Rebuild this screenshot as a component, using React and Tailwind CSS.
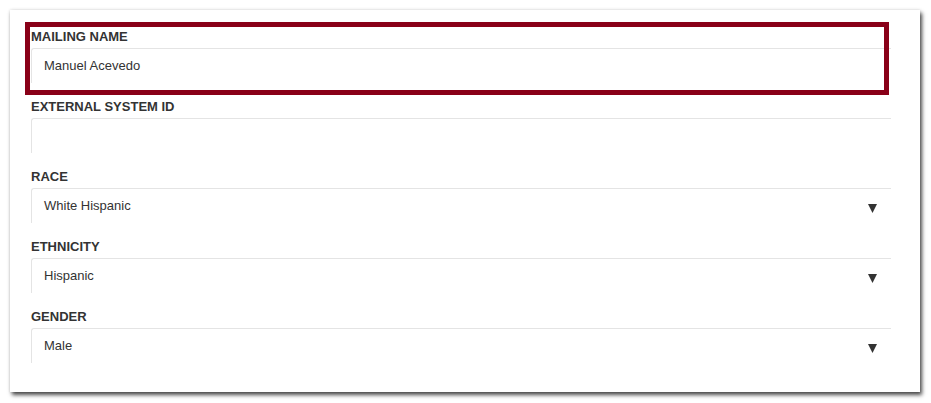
import React from "react";

const fields = [
    { label: "Mailing Name", value: "Manuel Acevedo", highlight: true },
    { label: "External System ID", value: "" },
    { label: "Race", value: "White Hispanic", select: true },
    { label: "Ethnicity", value: "Hispanic", select: true },
    { label: "Gender", value: "Male", select: true },
];

const Caret = () => (
    <svg width="9" height="9" viewBox="0 0 9 9" className="mt-1 shrink-0">
        <polygon points="0,0 9,0 4.5,9" fill="#333333" />
    </svg>
);

const Field = ({ label, value, select, highlight }) => (
    <div className="relative mb-[15px]">
        <label className="block h-[18px] text-[13px] leading-[18px] font-bold uppercase text-[#333]">{label}</label>
        <div className="mt-[2px] h-[35px] flex items-center justify-between pl-3 pr-[14px] bg-white border-t border-l border-[#e4e4e4] rounded-tl-[3px] text-[13px] text-[#333]">
            <span>{value}</span>
            {select && <Caret />}
        </div>
        {/* Highlight frame drawn over the field */}
        {highlight && (
            <div className="absolute -left-[6px] -top-[6px] right-[2px] -bottom-[12px] border-[5px] border-[#890018] pointer-events-none"></div>
        )}
    </div>
);

export default function App() {
    return (
        <div className="w-[931px] h-[403px] bg-white pt-[10px] pl-[10px]" style={{ fontFamily: '"Liberation Sans", Arial, sans-serif' }}>
            <div className="w-[910px] h-[382px] bg-white pt-[18px] pl-[21px] pr-[29px] shadow-[2px_3px_4px_rgba(0,0,0,0.7),0_0_3px_rgba(0,0,0,0.15)]">
                {fields.map((f) => (
                    <Field key={f.label} {...f} />
                ))}
            </div>
        </div>
    );
}
